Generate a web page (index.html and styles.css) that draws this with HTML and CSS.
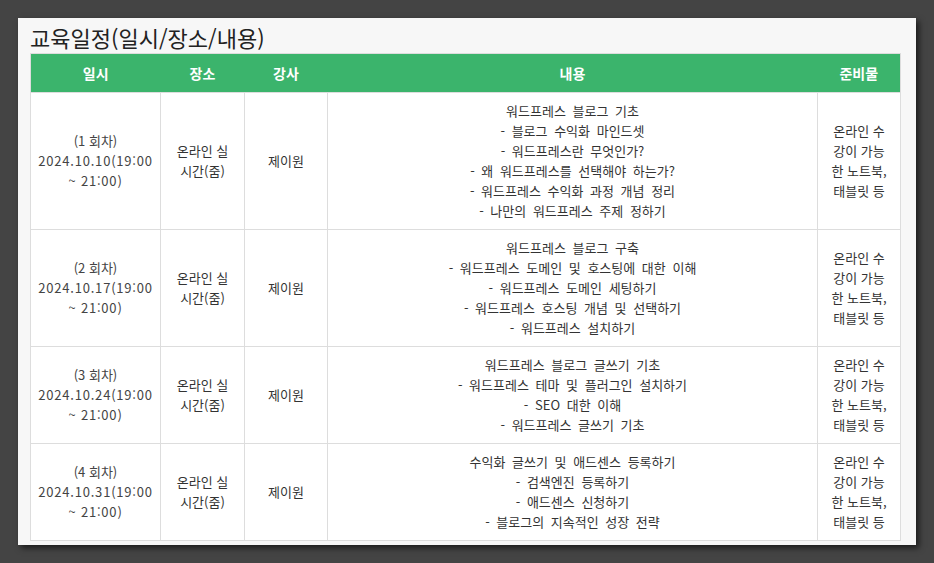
FILE: index.html
```html
<!DOCTYPE html>
<html lang="ko">

<head>
    <meta charset="UTF-8">
    <meta name="viewport" content="width=device-width, initial-scale=1.0">
    <title>교육일정</title>
    <link rel="stylesheet" href="styles.css">
</head>

<body>
    <main class="panel">
        <h2 class="title">교육일정(일시/장소/내용)</h2>
        <table class="schedule">
            <colgroup>
                <col class="col-date">
                <col class="col-place">
                <col class="col-teacher">
                <col class="col-content">
                <col class="col-prep">
            </colgroup>
            <thead>
                <tr>
                    <th>일시</th>
                    <th>장소</th>
                    <th>강사</th>
                    <th>내용</th>
                    <th>준비물</th>
                </tr>
            </thead>
            <tbody>
                <tr>
                    <td class="date">(1 회차)<br><span class="num">2024.10.10(19:00 ~ 21:00)</span></td>
                    <td>온라인 실시간(줌)</td>
                    <td>제이원</td>
                    <td class="content">워드프레스 블로그 기초<br>- 블로그 수익화 마인드셋<br>- 워드프레스란 무엇인가?<br>- 왜 워드프레스를 선택해야 하는가?<br>- 워드프레스 수익화 과정 개념 정리<br>- 나만의 워드프레스 주제 정하기</td>
                    <td>온라인 수강이 가능한 노트북, 태블릿 등</td>
                </tr>
                <tr>
                    <td class="date">(2 회차)<br><span class="num">2024.10.17(19:00 ~ 21:00)</span></td>
                    <td>온라인 실시간(줌)</td>
                    <td>제이원</td>
                    <td class="content">워드프레스 블로그 구축<br>- 워드프레스 도메인 및 호스팅에 대한 이해<br>- 워드프레스 도메인 세팅하기<br>- 워드프레스 호스팅 개념 및 선택하기<br>- 워드프레스 설치하기</td>
                    <td>온라인 수강이 가능한 노트북, 태블릿 등</td>
                </tr>
                <tr>
                    <td class="date">(3 회차)<br><span class="num">2024.10.24(19:00 ~ 21:00)</span></td>
                    <td>온라인 실시간(줌)</td>
                    <td>제이원</td>
                    <td class="content">워드프레스 블로그 글쓰기 기초<br>- 워드프레스 테마 및 플러그인 설치하기<br>- SEO 대한 이해<br>- 워드프레스 글쓰기 기초</td>
                    <td>온라인 수강이 가능한 노트북, 태블릿 등</td>
                </tr>
                <tr>
                    <td class="date">(4 회차)<br><span class="num">2024.10.31(19:00 ~ 21:00)</span></td>
                    <td>온라인 실시간(줌)</td>
                    <td>제이원</td>
                    <td class="content">수익화 글쓰기 및 애드센스 등록하기<br>- 검색엔진 등록하기<br>- 애드센스 신청하기<br>- 블로그의 지속적인 성장 전략</td>
                    <td>온라인 수강이 가능한 노트북, 태블릿 등</td>
                </tr>
            </tbody>
        </table>
    </main>
</body>

</html>
```

FILE: styles.css
```css
* {
    box-sizing: border-box;
    margin: 0;
    padding: 0;
    font-family: "Noto Sans CJK KR", "Noto Sans", sans-serif;
    color: #333;
}

body {
    background: #444;
    padding: 18px;
}

.panel {
    background: #f7f7f7;
    padding: 4px 15px 4px 12px;
    box-shadow: 3px 3px 6px rgba(0, 0, 0, 0.6);
}

.title {
    font-size: 22px;
    font-weight: normal;
    line-height: 31px;
    color: #222;
}

.schedule {
    width: 100%;
    border-collapse: collapse;
    table-layout: fixed;
    background: #fff;
    border: 1px solid #ddd;
}

.col-date {
    width: 130px;
}

.col-place {
    width: 84px;
}

.col-teacher {
    width: 83px;
}

.col-prep {
    width: 83px;
}

th {
    background: #3bb46c;
    color: #fff;
    font-size: 14px;
    font-weight: bold;
    height: 39px;
}

td {
    border: 1px solid #ddd;
    font-size: 13px;
    line-height: 20px;
    text-align: center;
    vertical-align: middle;
    padding: 8px 10px;
}

.date {
    color: #444;
    padding: 8px 6px;
}

.num {
    color: #444;
    letter-spacing: 0.8px;
}

.content {
    word-spacing: 3px;
}
```
